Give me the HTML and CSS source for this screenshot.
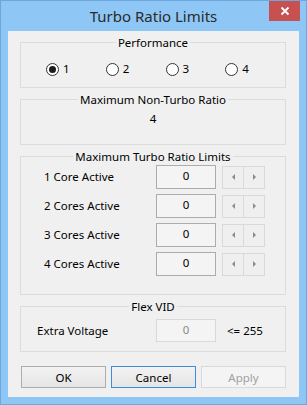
FILE: index.html
```html
<!DOCTYPE html>
<html lang="en">
<head>
    <meta charset="UTF-8">
    <title>Turbo Ratio Limits</title>
    <link rel="stylesheet" href="styles.css">
</head>
<body>
    <div class="window">
        <div class="titlebar">
            <span class="title">Turbo Ratio Limits</span>
            <div class="close">
                <svg width="10" height="10" viewBox="0 0 10 10"><path d="M1.5 1.5 L8.5 8.5 M8.5 1.5 L1.5 8.5" stroke="#fff" stroke-width="1.8"/></svg>
            </div>
        </div>

        <div class="client">
            <div class="group group-perf">
                <div class="caption"><span>Performance</span></div>
                <div class="radios">
                    <label class="radio"><span class="dot checked"></span>1</label>
                    <label class="radio"><span class="dot"></span>2</label>
                    <label class="radio"><span class="dot"></span>3</label>
                    <label class="radio"><span class="dot"></span>4</label>
                </div>
            </div>

            <div class="group group-ratio">
                <div class="caption"><span>Maximum Non-Turbo Ratio</span></div>
                <div class="value">4</div>
            </div>

            <div class="group group-turbo">
                <div class="caption"><span>Maximum Turbo Ratio Limits</span></div>
                <div class="row">
                    <span class="label">1 Core Active</span>
                    <div class="edit">0</div>
                    <div class="spin"><div class="spin-btn"><span class="arrow-left"></span></div><div class="spin-btn"><span class="arrow-right"></span></div></div>
                </div>
                <div class="row">
                    <span class="label">2 Cores Active</span>
                    <div class="edit">0</div>
                    <div class="spin"><div class="spin-btn"><span class="arrow-left"></span></div><div class="spin-btn"><span class="arrow-right"></span></div></div>
                </div>
                <div class="row">
                    <span class="label">3 Cores Active</span>
                    <div class="edit">0</div>
                    <div class="spin"><div class="spin-btn"><span class="arrow-left"></span></div><div class="spin-btn"><span class="arrow-right"></span></div></div>
                </div>
                <div class="row">
                    <span class="label">4 Cores Active</span>
                    <div class="edit">0</div>
                    <div class="spin"><div class="spin-btn"><span class="arrow-left"></span></div><div class="spin-btn"><span class="arrow-right"></span></div></div>
                </div>
            </div>

            <div class="group group-flex">
                <div class="caption"><span>Flex VID</span></div>
                <div class="row row-flex">
                    <span class="label label-flex">Extra Voltage</span>
                    <div class="edit disabled">0</div>
                    <span class="limit">&lt;= 255</span>
                </div>
            </div>

            <div class="buttons">
                <button class="btn">OK</button>
                <button class="btn default">Cancel</button>
                <button class="btn" disabled>Apply</button>
            </div>
        </div>
    </div>
</body>
</html>
```

FILE: styles.css
```css
body {
    margin: 0;
    font-family: "Noto Sans", "Open Sans", sans-serif;
    font-size: 11.5px;
    color: #000;
}

.window {
    position: relative;
    width: 307px;
    height: 405px;
    box-sizing: border-box;
    background: #8ec6f6;
    border: 1px solid #6ea6de;
    padding: 0 7px 7px 7px;
}

.titlebar {
    height: 30px;
    display: flex;
    align-items: center;
    justify-content: center;
}

.title {
    font-size: 15px;
    color: #2b2b2b;
    margin-top: -1px;
}

.close {
    position: absolute;
    top: 0;
    right: 6px;
    width: 31px;
    height: 20px;
    background: #c75050;
    display: flex;
    align-items: center;
    justify-content: center;
}

.client {
    height: 366px;
    background: #f0f0f0;
    padding: 11px 13px 0 12px;
    box-sizing: border-box;
}

.group {
    border: 1px solid #dcdcdc;
    margin-bottom: 11px;
}

.caption {
    margin-top: -8px;
    height: 16px;
    line-height: 16px;
    text-align: center;
}

.caption span {
    background: #f0f0f0;
    padding: 0 2px;
}

/* Performance */
.group-perf {
    height: 44px;
}

.radios {
    display: flex;
    margin: 10px 0 0 25px;
    height: 16px;
    align-items: center;
}

.radio {
    width: 60px;
    display: flex;
    align-items: center;
    line-height: 16px;
}

.dot {
    width: 11px;
    height: 11px;
    border: 1px solid #333;
    border-radius: 50%;
    background: #fff;
    margin-right: 4px;
    position: relative;
}

.dot.checked::after {
    content: "";
    position: absolute;
    left: 2px;
    top: 2px;
    width: 7px;
    height: 7px;
    border-radius: 50%;
    background: #1b1b1b;
}

/* Non-turbo ratio */
.group-ratio {
    height: 44px;
}

.value {
    text-align: center;
    margin-top: 3px;
    line-height: 16px;
}

/* Turbo limits */
.group-turbo {
    height: 137px;
    padding-top: 0;
}

.group-turbo .row:first-of-type {
    margin-top: 9px;
}

.row {
    display: flex;
    align-items: center;
    height: 24px;
    margin-bottom: 5px;
}

.label {
    width: 112px;
    padding-left: 23px;
    line-height: 16px;
}

.edit {
    width: 60px;
    height: 24px;
    box-sizing: border-box;
    border: 1px solid #acacac;
    background: #f4f4f4;
    text-align: center;
    line-height: 19px;
}

.edit.disabled {
    border-color: #d9d9d9;
    color: #8a8a8a;
    height: 23px;
}

.spin {
    display: flex;
    margin-left: 6px;
}

.spin-btn {
    width: 22px;
    height: 23px;
    box-sizing: border-box;
    border: 1px solid #d9d9d9;
    background: #efefef;
    display: flex;
    align-items: center;
    justify-content: center;
}

.spin-btn + .spin-btn {
    margin-left: -1px;
}

.arrow-left {
    width: 0;
    height: 0;
    border-top: 3px solid transparent;
    border-bottom: 3px solid transparent;
    border-right: 3px solid #8c8c8c;
}

.arrow-right {
    width: 0;
    height: 0;
    border-top: 3px solid transparent;
    border-bottom: 3px solid transparent;
    border-left: 3px solid #8c8c8c;
}

/* Flex VID */
.group-flex {
    height: 44px;
    margin-bottom: 14px;
}

.row-flex {
    margin-top: 4px;
    height: 23px;
}

.label-flex {
    padding-left: 16px;
    width: 119px;
}

.limit {
    margin-left: 11px;
}

/* Buttons */
.buttons {
    display: flex;
    gap: 5px;
    padding-left: 1px;
}

.btn {
    width: 85px;
    height: 22px;
    box-sizing: border-box;
    border: 1px solid #adadad;
    background: linear-gradient(#f2f2f2, #e5e5e5);
    font-family: "Noto Sans", "Open Sans", sans-serif;
    font-size: 11.5px;
    color: #000;
    padding: 0;
}

.btn.default {
    border-color: #3c8ddc;
}

.btn:disabled {
    border-color: #d9d9d9;
    background: #f4f4f4;
    color: #a0a0a0;
}
```
